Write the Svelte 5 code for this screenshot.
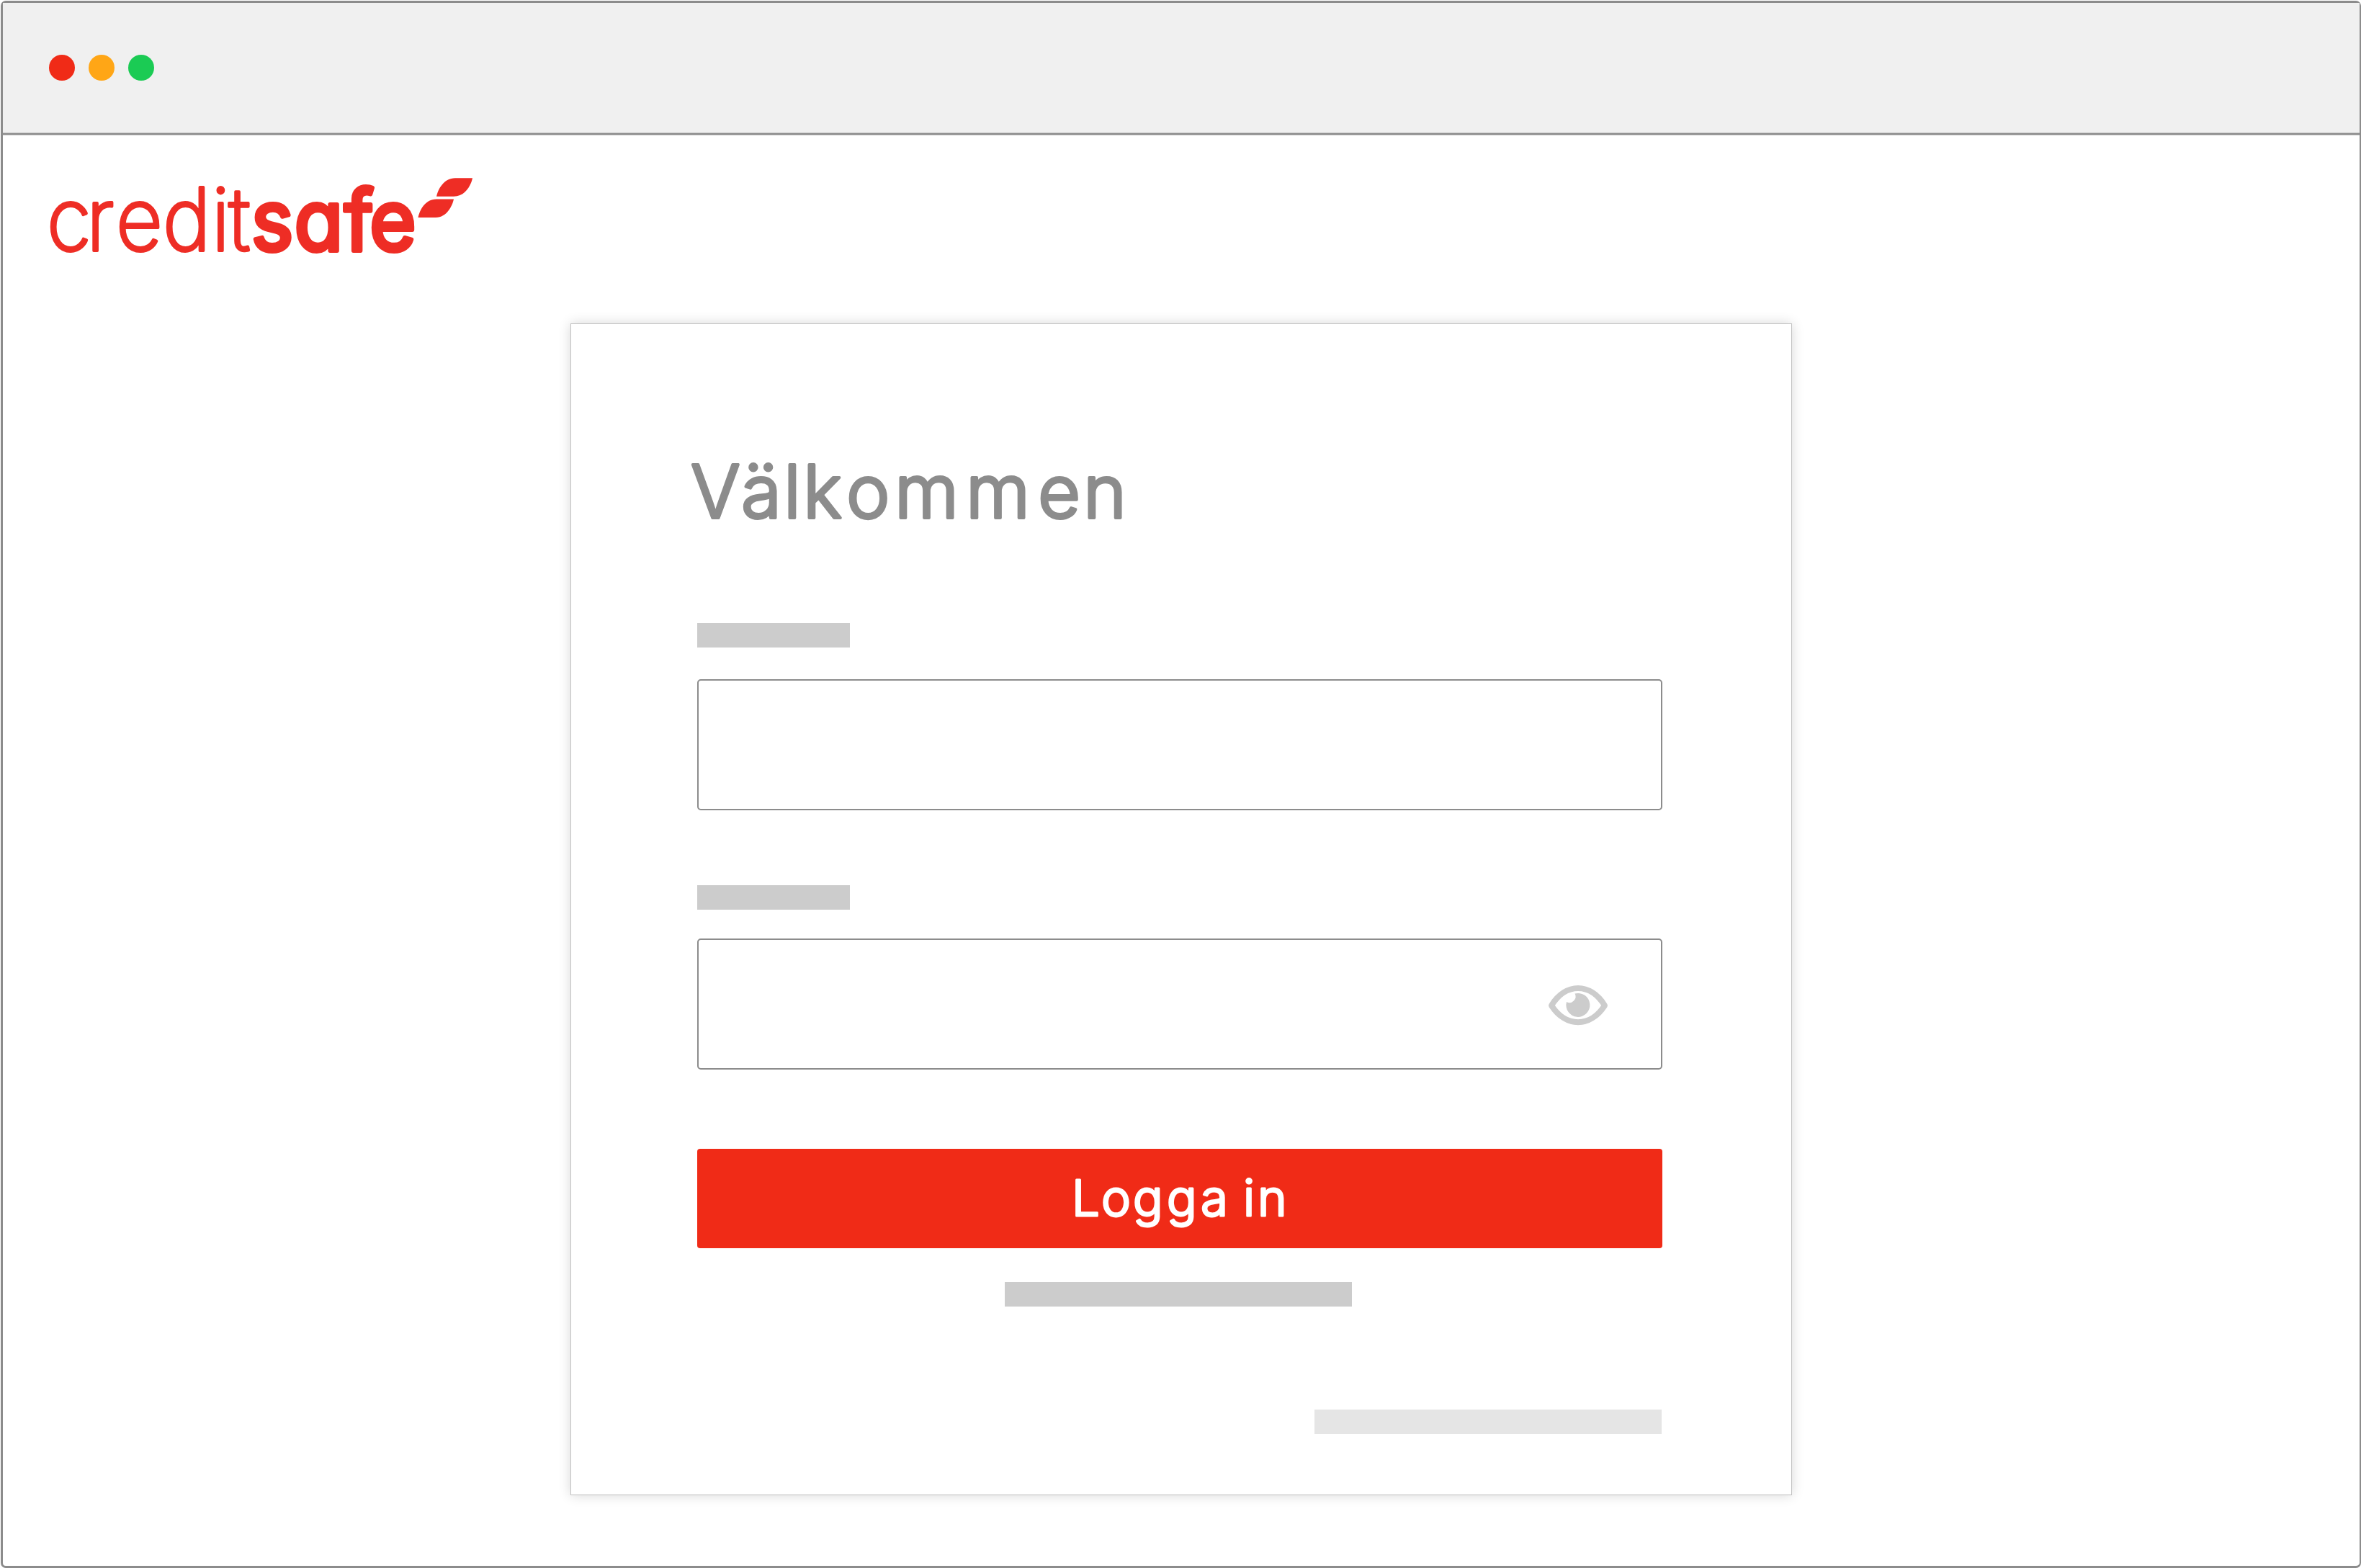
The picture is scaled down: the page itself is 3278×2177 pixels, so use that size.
<script>
	const dots = ["red", "orange", "green"];
</script>

<main class="window">
	<header class="titlebar">
		{#each dots as dot}
			<span class="dot {dot}"></span>
		{/each}
	</header>

	<svg class="logo" width="620" height="160" viewBox="50 225 620 160" role="img" aria-label="creditsafe">
		<g class="brand">
			<text class="light" y="348.5" x="70 129 173 243 316 341" font-size="121" transform="scale(0.93 1)">credit</text>
			<text class="heavy" y="348" x="367 430 503 540" font-size="117" transform="scale(0.95 1)">safe</text>
		</g>
		<path d="M606 272.7C608 263 616 247.3 632 247.3H656C654 257 646 272.7 630 272.7Z" />
		<path d="M580.5 302C582.500 292 590 276.500 606 276.500H630C628 286 620 302 605 302Z" />
	</svg>

	<form class="card" on:submit|preventDefault>
		<svg class="title" width="660" height="160" viewBox="945 605 660 160">
			<text y="719" x="959 1029 1088 1115 1175 1242 1341 1441 1504" font-size="102">Välkommen</text>
		</svg>

		<span class="label first"></span>
		<div class="field"></div>

		<span class="label second"></span>
		<div class="field password">
			<svg class="eye" width="84" height="58" viewBox="0 0 84 58">
				<path class="lid" d="M5 29C25-3 59-3 79 29C59 60 25 60 5 29Z" />
				<path d="M37.500 12.500A16.500 16.500 0 1 1 26 24A8.500 8.500 0 0 0 37.500 12.500Z" />
			</svg>
		</div>

		<button class="submit" aria-label="Logga in">
			<svg width="320" height="100" viewBox="1478 1614 320 100">
				<text y="1687.5" x="1488 1529 1573 1620 1667 1700 1726 1746" font-size="69">Logga in</text>
			</svg>
		</button>

		<span class="link"></span>
		<span class="help"></span>
	</form>
</main>

<style>
	:global(body) {
		background: #fff;
	}

	.window {
		box-sizing: border-box;
		width: 3277px;
		height: 2176px;
		margin: 1px 0 0 1px;
		border: 3px solid #8c8c8c;
		border-right-width: 2px;
		border-radius: 7px;
		font-family: Inter, sans-serif;
	}

	.titlebar {
		box-sizing: border-box;
		display: flex;
		align-items: center;
		gap: 19px;
		height: 183px;
		padding: 0 64px 1px;
		background: #f0f0f0;
		border-bottom: 2px solid #8c8c8c;
		box-shadow: inset 0 -1px #c2c2c2, 0 1px #c6c6c6;
	}

	.dot {
		width: 36px;
		height: 36px;
		border-radius: 50%;
	}

	.red {
		background: #f02b17;
	}

	.orange {
		background: #ffa616;
	}

	.green {
		background: #1bcb54;
	}

	.logo {
		display: block;
		margin: 38px 0 0 46px;
		fill: #ee2d25;
	}

	.brand {
		stroke: #ee2d25;
		stroke-linejoin: round;
	}

	.light {
		font-weight: 200;
		stroke-width: 4px;
	}

	.heavy {
		font-weight: 400;
		font-feature-settings: "cv11";
		stroke-width: 6px;
	}

	.card {
		box-sizing: border-box;
		display: flex;
		flex-direction: column;
		width: 1696px;
		height: 1627px;
		margin: 64px 0 0 788px;
		padding: 155px 180px 0 175px;
		border: 1px solid #c0c0c0;
		box-shadow: 0 0 16px rgba(0, 0, 0, 0.16);
	}

	.title {
		align-self: flex-start;
		margin-left: -23px;
		fill: #8c8c8c;
		stroke: #8c8c8c;
		stroke-width: 4px;
		stroke-linejoin: round;
		font-weight: 300;
	}

	.label {
		width: 212px;
		height: 34px;
		background: #ccc;
	}

	.first {
		margin-top: 100px;
	}

	.second {
		margin-top: 104px;
	}

	.field {
		box-sizing: border-box;
		width: 1340px;
		height: 182px;
		margin-top: 44px;
		border: 2px solid #8c8c8c;
		border-radius: 5px;
	}

	.password {
		display: flex;
		align-items: center;
		justify-content: flex-end;
		margin-top: 40px;
		padding: 4px 73px 0 0;
	}

	.eye {
		fill: #ccc;
	}

	.lid {
		fill: none;
		stroke: #ccc;
		stroke-width: 8px;
		stroke-linejoin: round;
	}

	.submit {
		display: flex;
		align-items: center;
		justify-content: center;
		width: 1340px;
		height: 138px;
		margin-top: 110px;
		padding: 0;
		border: 0;
		border-radius: 4px;
		background: #f02b17;
		font-family: inherit;
	}

	.submit svg {
		fill: #fff;
		stroke: #fff;
		stroke-width: 3px;
		stroke-linejoin: round;
		font-weight: 300;
	}

	.link {
		width: 482px;
		height: 34px;
		margin: 47px 0 0 427px;
		background: #ccc;
	}

	.help {
		align-self: flex-end;
		width: 482px;
		height: 34px;
		margin-top: 143px;
		background: #e5e5e5;
	}
</style>
